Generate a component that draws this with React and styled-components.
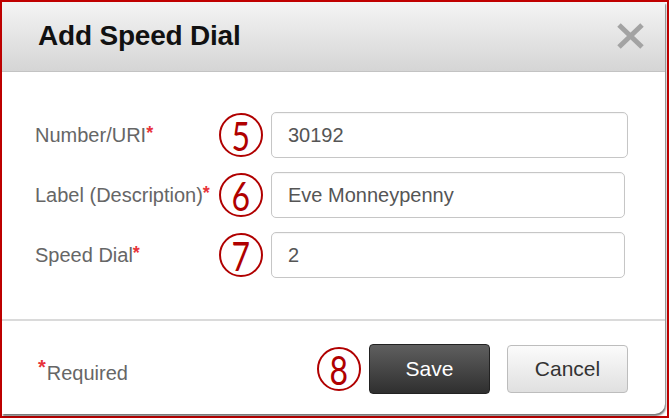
import React from "react";
import styled, { createGlobalStyle } from "styled-components";

const Global = createGlobalStyle`
  html, body { margin: 0; padding: 0; background: #fff; }
  body { font-family: "Liberation Sans", Arial, sans-serif; }
  * { box-sizing: border-box; }
`;

const Frame = styled.div`
  width: 669px;
  height: 418px;
  border: 2px solid #c00000;
  background: #fff;
  padding: 0 2px 2px 0;
`;

const Dialog = styled.div`
  width: 663px;
  height: 412px;
  background: #fff;
  border-radius: 0 0 10px 0;
  box-shadow: 1px 2px 2px rgba(0, 0, 0, 0.55);
  display: flex;
  flex-direction: column;
`;

const Header = styled.div`
  height: 70px;
  flex: none;
  display: flex;
  align-items: center;
  justify-content: space-between;
  padding: 0 20px 2px 36px;
  background: linear-gradient(#f4f4f4, #d5d5d5);
  border-bottom: 1px solid #c3c3c3;
`;

const Title = styled.h1`
  margin: 0;
  font-size: 28px;
  font-weight: bold;
  color: #111;
  letter-spacing: -0.2px;
`;

const Close = styled.svg`
  width: 29px;
  height: 26px;
  display: block;
`;

const Body = styled.div`
  flex: 1;
  display: flex;
  flex-direction: column;
  gap: 14px;
  padding: 40px 0 0 33px;
`;

const Row = styled.div`
  display: flex;
  align-items: center;
  height: 46px;
`;

const Label = styled.label`
  width: 184px;
  font-size: 20px;
  color: #666;
`;

const Star = styled.span`
  color: #e8333a;
  font-weight: bold;
  font-size: 18px;
  vertical-align: 3px;
`;

const Marker = styled.div`
  width: 44px;
  height: 44px;
  flex: none;
  border: 2px solid #b00000;
  border-radius: 50%;
  display: flex;
  align-items: center;
  justify-content: center;
  margin-right: 8px;
`;

const Digit = styled.span`
  color: #b00000;
  font-family: Lato, "Liberation Sans", Arial, sans-serif;
  font-weight: 400;
  font-size: 41px;
  line-height: 1;
  display: inline-block;
  transform: scaleX(0.78);
  margin-top: 1px;
`;

const Input = styled.div`
  width: ${(p) => p.$w}px;
  height: 46px;
  border: 1px solid #c6c6c6;
  border-radius: 5px;
  box-shadow: inset 0 1px 1px rgba(0, 0, 0, 0.04);
  display: flex;
  align-items: center;
  padding-left: 16px;
  font-size: 20px;
  color: #555;
`;

const Divider = styled.div`
  height: 2px;
  flex: none;
  background: #dadada;
`;

const Footer = styled.div`
  height: 93px;
  flex: none;
  display: flex;
  align-items: center;
  padding: 2px 37px 0 36px;
`;

const Required = styled.div`
  font-size: 20px;
  color: #666;
  margin-top: 4px;
  flex: 1;
`;

const ReqStar = styled.span`
  color: #e8333a;
  font-size: 20px;
  font-weight: bold;
  vertical-align: 6px;
  margin-right: 1px;
`;

const Button = styled.button`
  width: 121px;
  height: ${(p) => (p.$primary ? 50 : 48)}px;
  border-radius: 4px;
  font-family: "Liberation Sans", Arial, sans-serif;
  font-size: 21px;
  padding: 0;
  border: 1px solid ${(p) => (p.$primary ? "#222" : "#bdbdbd")};
  color: ${(p) => (p.$primary ? "#fff" : "#333")};
  background: ${(p) =>
    p.$primary
      ? "linear-gradient(#5f5f5f, #2f2f2f)"
      : "linear-gradient(#fbfbfb, #e0e0e0)"};
  margin-left: ${(p) => p.$ml || 0}px;
`;

const rows = [
  { label: "Number/URI", n: "5", value: "30192", w: 357 },
  { label: "Label (Description)", n: "6", value: "Eve Monneypenny", w: 354 },
  { label: "Speed Dial", n: "7", value: "2", w: 354 },
];

export default function App() {
  return (
    <>
      <Global />
      <Frame>
        <Dialog>
          <Header>
            <Title>Add Speed Dial</Title>
            <Close viewBox="0 0 29 26">
              <path
                d="M3 2 L26 24 M26 2 L3 24"
                stroke="#a3a3a3"
                strokeWidth="5"
                strokeLinecap="butt"
              />
            </Close>
          </Header>
          <Body>
            {rows.map((r) => (
              <Row key={r.n}>
                <Label>
                  {r.label}
                  <Star>*</Star>
                </Label>
                <Marker>
                  <Digit>{r.n}</Digit>
                </Marker>
                <Input $w={r.w}>{r.value}</Input>
              </Row>
            ))}
          </Body>
          <Divider />
          <Footer>
            <Required>
              <ReqStar>*</ReqStar>Required
            </Required>
            <Marker>
              <Digit>8</Digit>
            </Marker>
            <Button $primary>Save</Button>
            <Button $ml={17}>Cancel</Button>
          </Footer>
        </Dialog>
      </Frame>
    </>
  );
}
